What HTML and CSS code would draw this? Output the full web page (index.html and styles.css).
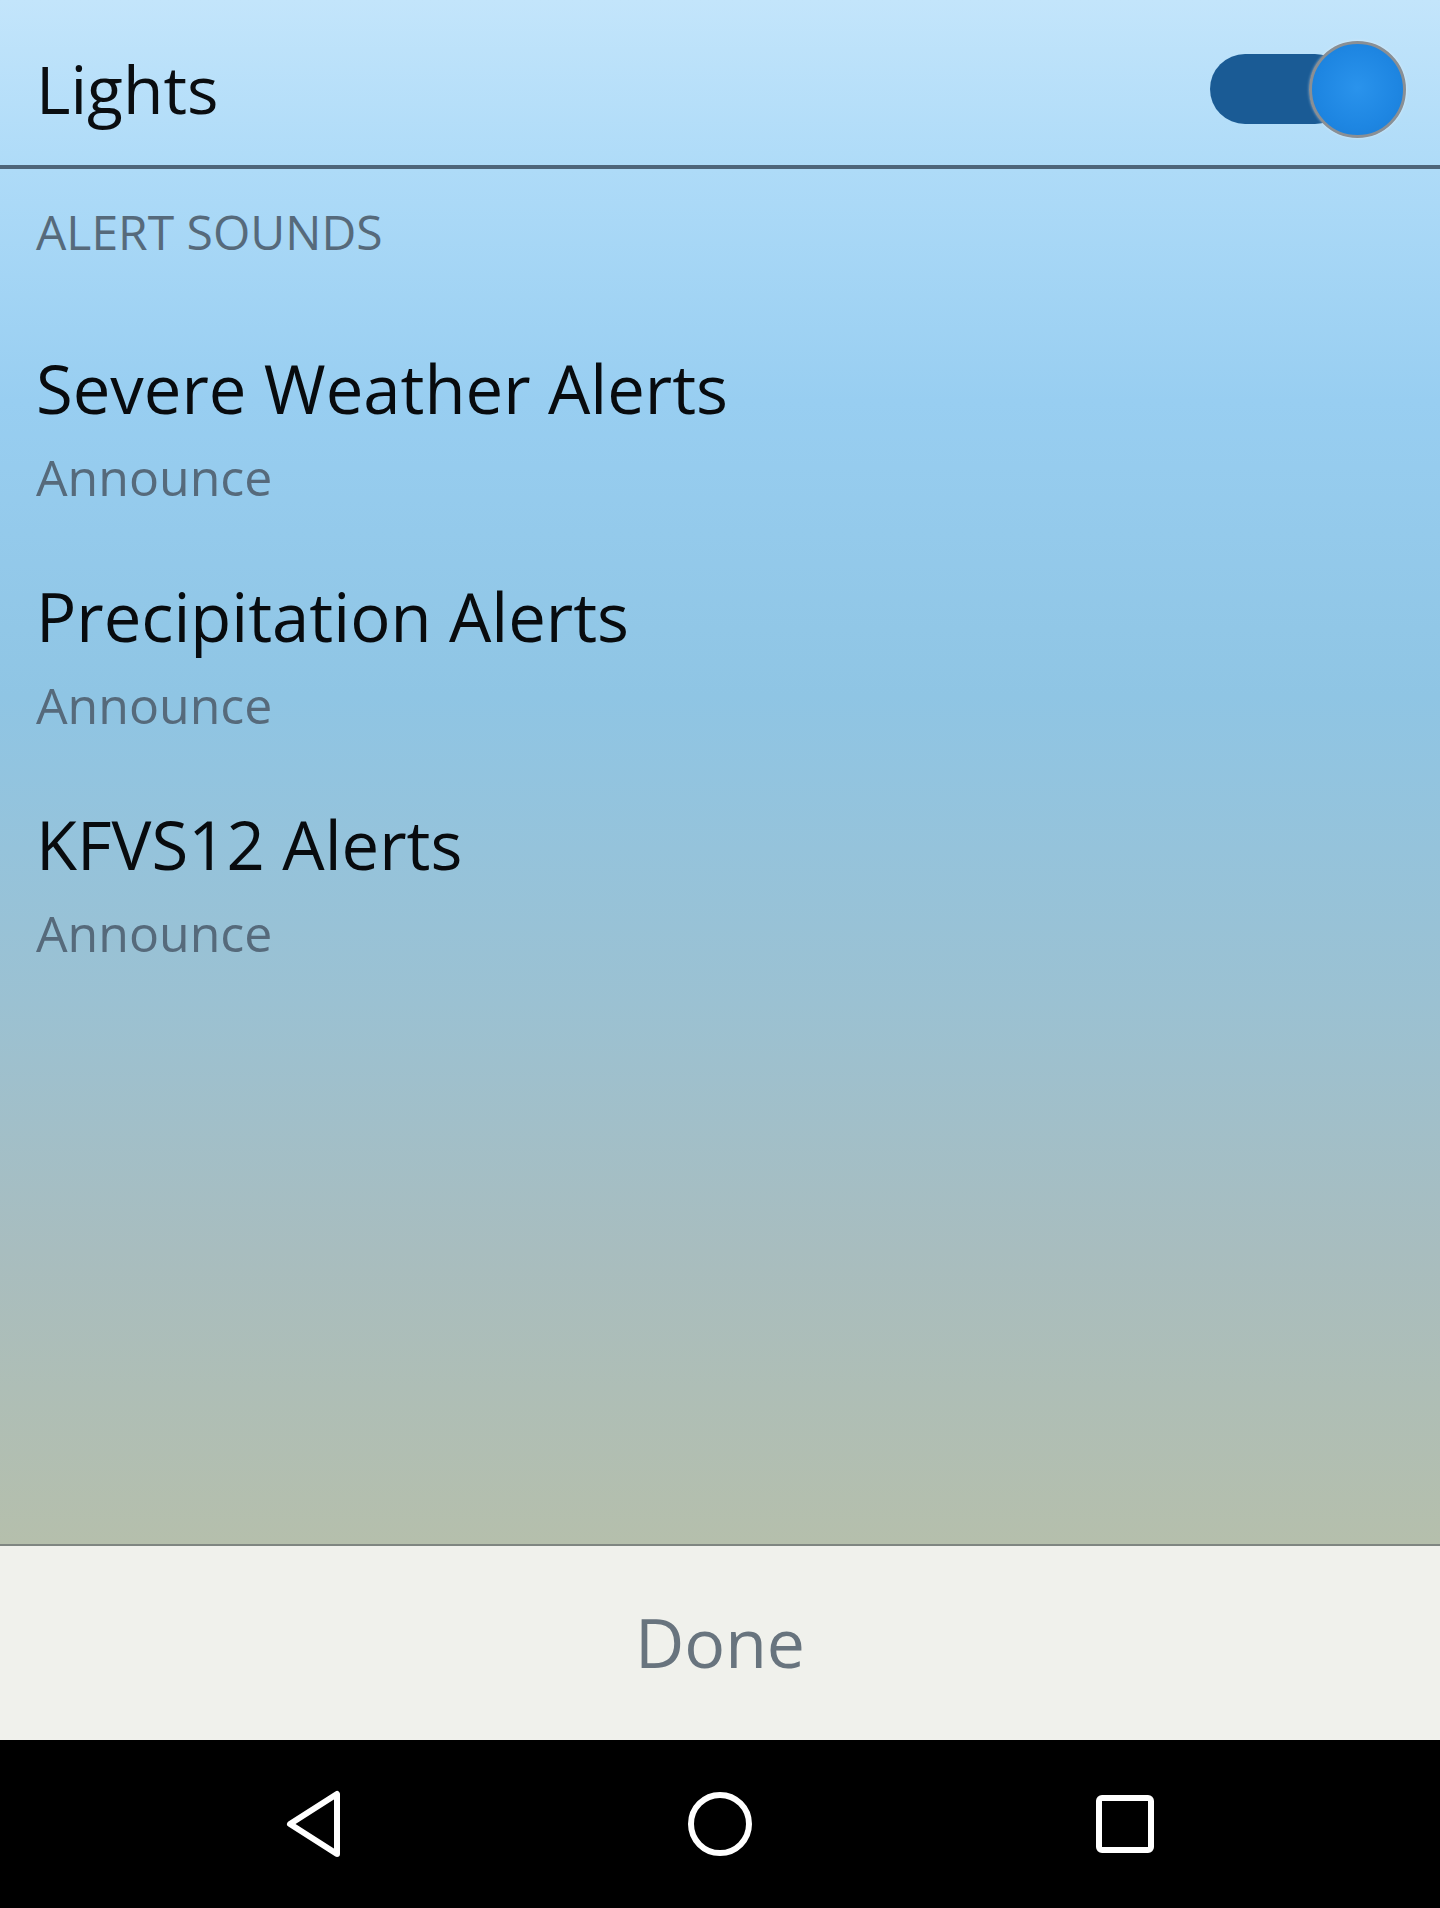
FILE: index.html
```html
<!DOCTYPE html>
<html lang="en">
<head>
<meta charset="utf-8">
<title>Lights</title>
<link rel="stylesheet" href="styles.css">
</head>
<body>
<div class="screen">
  <main class="main">
    <header class="header">
      <h1 class="title">Lights</h1>
      <div class="toggle" role="switch" aria-checked="true">
        <span class="track"></span>
        <span class="knob"></span>
      </div>
    </header>
    <div class="section-label">ALERT SOUNDS</div>
    <ul class="list">
      <li class="item">
        <span class="item-title">Severe Weather Alerts</span>
        <span class="item-sub">Announce</span>
      </li>
      <li class="item">
        <span class="item-title">Precipitation Alerts</span>
        <span class="item-sub">Announce</span>
      </li>
      <li class="item">
        <span class="item-title">KFVS12 Alerts</span>
        <span class="item-sub">Announce</span>
      </li>
    </ul>
  </main>
  <footer class="footer">
    <span class="done">Done</span>
  </footer>
  <nav class="navbar">
    <svg class="nav-icon" viewBox="0 0 70 70" aria-label="Back">
      <path d="M57 5 L57 65 L10 35 Z" fill="none" stroke="#fff" stroke-width="6" stroke-linejoin="round"/>
    </svg>
    <svg class="nav-icon" viewBox="0 0 70 70" aria-label="Home">
      <circle cx="35" cy="35" r="29" fill="none" stroke="#fff" stroke-width="6"/>
    </svg>
    <svg class="nav-icon" viewBox="0 0 70 70" aria-label="Recents">
      <rect x="9" y="9" width="52" height="52" rx="3" fill="none" stroke="#fff" stroke-width="6"/>
    </svg>
  </nav>
</div>
</body>
</html>
```

FILE: styles.css
```css
* { box-sizing: border-box; }

html, body {
  margin: 0;
  padding: 0;
}

body {
  width: 1440px;
  height: 1908px;
  font-family: "Open Sans", "Noto Sans", "Liberation Sans", sans-serif;
  overflow: hidden;
}

.screen {
  display: flex;
  flex-direction: column;
  height: 1908px;
}

.main {
  flex: 1;
  background: linear-gradient(to bottom,
    #c3e5fb 0%,
    #aedbf8 11%,
    #98cef1 26%,
    #8fc5e4 45%,
    #9bc1d2 65%,
    #a8bdbf 81%,
    #b5bfac 100%);
}

.header {
  height: 169px;
  display: flex;
  align-items: center;
  justify-content: space-between;
  padding: 0 34px 0 36px;
  border-bottom: 4px solid #4e657a;
}

.title {
  margin: 10px 0 0 0;
  font-size: 66px;
  line-height: 80px;
  font-weight: 400;
  color: #0a0d10;
}

.toggle {
  display: flex;
  align-items: center;
  margin-top: 13px;
}

.track {
  width: 140px;
  height: 70px;
  border-radius: 35px;
  background: #1a5b95;
}

.knob {
  width: 97px;
  height: 97px;
  margin-left: -41px;
  border-radius: 50%;
  background: radial-gradient(circle at 50% 48%, #2a93ec 0%, #1e86e2 60%, #1a7cd4 100%);
  border: 3px solid #8a8f94;
  box-shadow: 0 0 3px rgba(255, 255, 255, 0.5);
}

.section-label {
  margin: 34px 0 0 36px;
  font-size: 48px;
  line-height: 58px;
  color: #566a7b;
}

.list {
  list-style: none;
  margin: 87px 0 0 0;
  padding: 0 0 0 36px;
  display: flex;
  flex-direction: column;
  gap: 69px;
}

.item {
  display: flex;
  flex-direction: column;
  gap: 19px;
}

.item-title {
  font-size: 67px;
  line-height: 80px;
  color: #080b0e;
}

.item-sub {
  font-size: 50px;
  line-height: 60px;
  color: #566a7b;
}

.footer {
  height: 196px;
  border-top: 2px solid #7f8681;
  background: #f0f1ec;
  display: flex;
  align-items: center;
  justify-content: center;
}

.done {
  font-size: 68px;
  line-height: 80px;
  color: #68747e;
  margin-top: -2px;
}

.navbar {
  height: 168px;
  background: #000;
  display: flex;
  align-items: center;
  justify-content: center;
  gap: 335px;
}

.nav-icon {
  width: 70px;
  height: 70px;
  display: block;
}
```
